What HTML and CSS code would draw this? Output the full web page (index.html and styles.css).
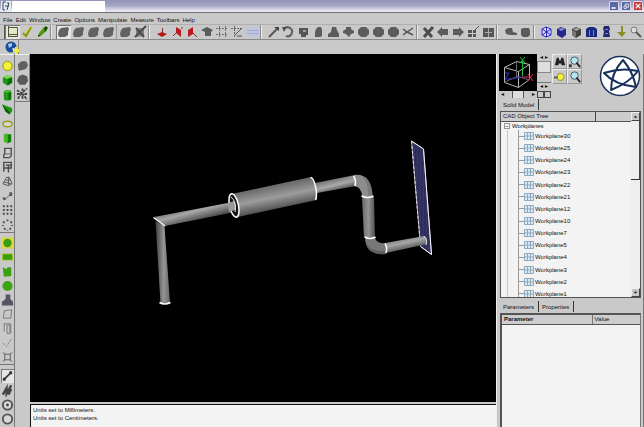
FILE: index.html
```html
<!DOCTYPE html>
<html lang="en">
<head>
<meta charset="utf-8">
<title>CAD Workspace</title>
<link rel="stylesheet" href="styles.css">
</head>
<body>
<svg class="defs" aria-hidden="true">
  <defs>
    <linearGradient id="tubeH" gradientUnits="userSpaceOnUse" x1="195" y1="202" x2="200" y2="221"><stop offset="0" stop-color="#555"/><stop offset=".45" stop-color="#a8a8a8"/><stop offset="1" stop-color="#444"/></linearGradient>
    <linearGradient id="tubeV" gradientUnits="userSpaceOnUse" x1="156" y1="0" x2="170" y2="0"><stop offset="0" stop-color="#444"/><stop offset=".55" stop-color="#959595"/><stop offset="1" stop-color="#666"/></linearGradient>
    <linearGradient id="drum" gradientUnits="userSpaceOnUse" x1="271" y1="185" x2="276" y2="210"><stop offset="0" stop-color="#666"/><stop offset=".5" stop-color="#9c9c9c"/><stop offset="1" stop-color="#4c4c4c"/></linearGradient>
    <linearGradient id="tubeR" gradientUnits="userSpaceOnUse" x1="334" y1="179" x2="337" y2="191"><stop offset="0" stop-color="#777"/><stop offset=".5" stop-color="#aaa"/><stop offset="1" stop-color="#505050"/></linearGradient>
    <linearGradient id="tubeD" gradientUnits="userSpaceOnUse" x1="362" y1="0" x2="375" y2="0"><stop offset="0" stop-color="#6a6a6a"/><stop offset=".5" stop-color="#929292"/><stop offset="1" stop-color="#505050"/></linearGradient>
    <linearGradient id="tubeE" gradientUnits="userSpaceOnUse" x1="404" y1="237" x2="407" y2="251"><stop offset="0" stop-color="#777"/><stop offset=".4" stop-color="#a6a6a6"/><stop offset="1" stop-color="#454545"/></linearGradient>
    <pattern id="mesh" width="3" height="3" patternUnits="userSpaceOnUse"><path fill="#2c2c58" d="M0 0h3v3H0z"/><path fill="#3a3a6c" d="M0 0h1v2H0zM2 2h1v1H2z"/></pattern>
  </defs>
  <symbol id="slab" viewBox="0 0 15 14"><path fill="#626262" d="M3 5l2-2 7-1 1 2-1 3 0 3-3 2H3L2 9z"/></symbol>
  <symbol id="disc" viewBox="0 0 15 14"><path fill="#5c5c5c" d="M5 2h5l3 3v4l-3 3H5L2 9V5z"/></symbol>
  <symbol id="tri" viewBox="0 0 15 14"><path fill="#5c5c5c" d="M6 2l4 0 1 3 2 4v3H2V9l3-2z"/></symbol>
  <symbol id="small-blob" viewBox="0 0 15 14"><path fill="#5c5c5c" d="M5 4l2-2h3l1 3v6l-2 1H4V7z"/></symbol>
  <symbol id="wp" viewBox="0 0 10 8"><path fill="#dceaf4" d="M0 0h10v8H0z"/><path fill="none" stroke="#8fa9c0" d="M.5 .5h9v7h-9zM0 4h10M3.500 0v8M6.500 0v8"/></symbol>
</svg>

<header class="titlebar">
  <svg class="app-icon" viewBox="0 0 10 10"><path fill="#e8eef4" d="M0 0h10v10H0z"/><path fill="none" stroke="#30485f" d="M5 1H2v8h2M4 5h4M6 2h2l-2 7"/></svg>
  <div class="title-field"></div>
  <div class="window-buttons">
    <button aria-label="Minimize"><svg viewBox="0 0 10 9"><path fill="#fff" d="M2 6h5v2H2z"/></svg></button>
    <button aria-label="Restore"><svg viewBox="0 0 10 9"><path fill="none" stroke="#fff" d="M4 4V2h4v4H6M2.500 4.500h3v3h-3z"/></svg></button>
    <button class="close" aria-label="Close"><svg viewBox="0 0 10 9"><path stroke="#fff" stroke-width="1.500" d="M2 1.500l6 6M8 1.500l-6 6"/></svg></button>
  </div>
</header>

<nav class="menubar">
  <button>File</button><button>Edit</button><button>Window</button><button>Create</button><button>Options</button><button>Manipulate</button><button>Measure</button><button>Toolbars</button><button>Help</button>
</nav>

<div class="toolbar" role="toolbar">
  <div class="tools first">
    <button class="on" aria-label="New"><svg viewBox="0 0 15 14"><path fill="#e4e8c8" stroke="#4a5a32" d="M3.500 2.500h9v9h-9z"/><path stroke="#4a5a32" d="M3 9.500h9M3.500 1v11"/></svg></button>
    <button aria-label="Accept"><svg viewBox="0 0 15 14"><path fill="none" stroke="#8d9800" stroke-width="2" d="M3 8l3 3 5-9"/><path stroke="#d8e020" d="M5 9l5-7"/></svg></button>
    <button aria-label="Edit"><svg viewBox="0 0 15 14"><path fill="#4c9a12" d="M4 8l5-6 3 0 0 3-5 5-4 2z"/><path fill="#1c4808" d="M9 3l2-2 2 2-3 4zM3 10h3l-3 2z"/></svg></button>
  </div>
  <div class="tools grip">
    <button class="on" aria-label="Solid"><svg><use href="#slab"/></svg></button>
    <button aria-label="Face"><svg><use href="#slab"/></svg></button>
    <button aria-label="Edge"><svg><use href="#slab"/></svg></button>
    <button aria-label="Body"><svg><use href="#slab"/></svg></button>
    <button class="split" aria-label="Part"><svg><use href="#slab"/></svg></button>
    <button aria-label="Deselect"><svg viewBox="0 0 15 14"><path fill="#808080" d="M3 3l8 0 0 8-8 1z"/><path fill="none" stroke="#4c4c4c" stroke-width="2" d="M2 12L13 1M3 3l8 9"/></svg></button>
  </div>
  <div class="tools grip wide">
    <button aria-label="Workplane"><svg viewBox="0 0 15 14"><path fill="#b81818" d="M2 9l5-2 5 2-5 3z"/><path stroke="#803030" d="M7.500 3v5"/></svg></button>
    <button aria-label="Workplane by face"><svg viewBox="0 0 15 14"><path fill="#c01820" d="M6 2l5 3v7L6 8z"/><path stroke="#803030" d="M3 11l4-4M11 3l2 0"/></svg></button>
    <button aria-label="Workplane by axis"><svg viewBox="0 0 15 14"><path fill="#c01820" d="M3 5l5-3v7l-5 3z"/><path stroke="#803030" d="M8 8l4 4"/></svg></button>
    <button aria-label="Sketch"><svg viewBox="0 0 15 14"><path fill="#5c5c5c" d="M1 5l6-3 6 3-2 2v4H5V7z"/></svg></button>
    <button aria-label="Grid"><svg viewBox="0 0 15 14"><path fill="none" stroke="#707070" stroke-dasharray="2 1" d="M1 3.500h12M4.500 1v11M10.500 1v11M1 9.500h12"/></svg></button>
    <button aria-label="Snap"><svg viewBox="0 0 15 14"><path fill="none" stroke="#686868" stroke-dasharray="2 1" d="M1 3.500h12M4.500 1v11"/><path stroke="#505050" d="M5 10l7-7M7 11h5"/></svg></button>
    <button aria-label="Plane list"><svg viewBox="0 0 15 14"><path fill="#bfc5dc" d="M2 2h12v10H2z"/><path stroke="#a4abd0" d="M2 5.500h12M2 8.500h12"/></svg></button>
  </div>
  <div class="tools grip">
    <button aria-label="Line"><svg viewBox="0 0 15 14"><path stroke="#555" stroke-width="2" d="M3 12l9-9"/><path fill="#444" d="M8 2h5v4z"/></svg></button>
    <button aria-label="Rotate"><svg viewBox="0 0 15 14"><path fill="none" stroke="#606060" stroke-width="2" d="M3 4a4.500 4.500 0 1 1 2 7"/><path fill="#505050" d="M1 2h5L3 7z"/></svg></button>
    <button aria-label="Extrude"><svg viewBox="0 0 15 14"><path fill="#555" d="M3 3h9v7l-2 0v2H5V9H3z"/><path fill="#a0a0a0" d="M7 5h3v2H7z"/></svg></button>
    <button aria-label="Revolve"><svg><use href="#small-blob"/></svg></button>
    <button aria-label="Loft"><svg><use href="#tri"/></svg></button>
    <button aria-label="Shell"><svg viewBox="0 0 15 14"><path fill="#5c5c5c" d="M5 2h5v2l3 2v2l-3 1-2 3-3-3-3-1V6l3-2z"/></svg></button>
    <button aria-label="Union"><svg><use href="#disc"/></svg></button>
    <button aria-label="Subtract"><svg><use href="#disc"/></svg></button>
    <button aria-label="Intersect"><svg><use href="#disc"/></svg></button>
    <button aria-label="Trim"><svg viewBox="0 0 15 14"><path fill="none" stroke="#555" stroke-width="1.500" d="M2 4l4 3 6-4M2 10l4-3 6 3"/></svg></button>
  </div>
  <div class="tools grip thin">
    <button aria-label="Delete"><svg viewBox="0 0 15 14"><path stroke="#4c4c4c" stroke-width="3" d="M3 3l8 9M12 2l-9 10"/></svg></button>
    <button aria-label="Move"><svg viewBox="0 0 15 14"><path fill="#5c5c5c" d="M1 7l5-5v2h6v6H6v2z"/></svg></button>
    <button aria-label="Copy"><svg viewBox="0 0 15 14"><path fill="#5c5c5c" d="M2 4h6V2l5 5-5 5v-2H2z"/></svg></button>
    <button aria-label="Array"><svg viewBox="0 0 15 14"><path fill="#555" d="M2 5h4v3H2zM7 5h3v3H7zM2 9h4v3H2zM7 9h3v3H7z"/><path stroke="#555" d="M9 5l4-4"/></svg></button>
    <button aria-label="Mirror"><svg viewBox="0 0 15 14"><path fill="#555" d="M2 3h11v9H2z"/><path stroke="#aaa" d="M7.500 3v9M4 7.500h7"/></svg></button>
  </div>
  <div class="tools grip wide">
    <button aria-label="Measure length"><svg viewBox="0 0 15 14"><path fill="#5c5c5c" d="M2 5l3-2 4 0 1 4 4 1v2H7l-4-1z"/></svg></button>
    <button aria-label="Measure mass"><svg viewBox="0 0 15 14"><path fill="#5c5c5c" d="M3 4l2-1h6l1 3v4l-2 2H5L3 10z"/></svg></button>
  </div>
  <div class="tools grip last">
    <button aria-label="Wireframe"><svg viewBox="0 0 15 14"><path fill="#dcdcf4" stroke="#2828c0" d="M3 4l4-2 5 2v6l-5 2-4-2zM3 4l9 6M12 4l-9 6M7.500 2v10"/></svg></button>
    <button aria-label="Shaded edges"><svg viewBox="0 0 15 14"><path fill="#28288c" d="M3 4l4-2 5 2v6l-4 3-5-3z"/><path fill="#8e8ed0" d="M4 4l4-1 3 1-4 2z"/></svg></button>
    <button aria-label="Shaded"><svg viewBox="0 0 15 14"><path fill="#444" d="M3 4l4-2 5 2v6l-5 3-4-3z"/><path fill="#aaa" d="M4 4l4-1 3 1-4 2z"/><path fill="#777" d="M3 5l4 2v5l-4-2z"/></svg></button>
    <button aria-label="Hidden line"><svg viewBox="0 0 15 14"><path fill="#182880" d="M2 4l3-2h5l3 2v8H2z"/><path stroke="#6a86dc" d="M5.500 5v6M9.500 5v6"/></svg></button>
    <button aria-label="Section"><svg viewBox="0 0 15 14"><path fill="#202870" d="M5 1h5l1 3-1 2 1 6H4l1-6-1-2z"/><path stroke="#8088d0" d="M6 4.500h3M6 8.500h3"/></svg></button>
    <button aria-label="Drop"><svg viewBox="0 0 15 14"><path stroke="#8a8c28" stroke-width="2" d="M8 1v7"/><path fill="#8a8c28" d="M3 7h9l-4 5z"/></svg></button>
    <button aria-label="Zoom"><svg viewBox="0 0 15 14"><circle cx="5" cy="5" r="3" fill="#ddd" stroke="#777"/><path stroke="#555" stroke-width="2" d="M7 7l5 5"/></svg></button>
  </div>
</div>

<div class="subbar">
  <button aria-label="Browser"><svg viewBox="0 0 15 13"><circle cx="7" cy="6" r="5.500" fill="#184c9c"/><path fill="#a8ccec" d="M4 3l4-1 0 3-3 2zM8 7l3 0-2 3z"/><path fill="#f0ec40" d="M9 8h2V6h2v2h2v3h-2v2h-2v-2H9z"/></svg></button>
</div>

<main class="workspace">
  <div class="rail" role="toolbar">
    <div class="stack tall">
      <button aria-label="Sphere"><svg viewBox="0 0 14 14"><circle cx="7" cy="7" r="5" fill="#f4f43c" stroke="#8a9000"/></svg></button>
      <button aria-label="Box"><svg viewBox="0 0 14 14"><path fill="#1e9a10" d="M2 4l5-2 5 2v6l-5 3-5-3z"/><path fill="#7cdc4c" d="M2 4l5-2 5 2-5 2z"/><path fill="#0c6c08" d="M7 6l5-2v6l-5 3z"/></svg></button>
      <button aria-label="Cylinder"><svg viewBox="0 0 14 14"><path fill="#229a14" d="M3 3l2-1h5l1 1v8l-1 2H4l-1-2z"/><path fill="#116a0a" d="M8 4h3v8H8z"/><path fill="#74cc50" d="M4 3h6v1H4z"/></svg></button>
      <button aria-label="Cone"><svg viewBox="0 0 14 14"><path fill="#1e9a14" d="M1 2l11 4v4l-3 3z"/><path fill="#0a5808" d="M1 2l8 8v3L5 10z"/></svg></button>
      <button aria-label="Torus"><svg viewBox="0 0 14 14"><ellipse cx="7" cy="7" rx="5" ry="3" fill="#d8d8cc" stroke="#9a9e24" stroke-width="1.500"/></svg></button>
      <button aria-label="Prism"><svg viewBox="0 0 14 14"><path fill="#48b824" d="M3 3l4-1v11l-4-2z"/><path fill="#147c0c" d="M7 3l4 0v8l-4 2z"/></svg></button>
      <button aria-label="Extruded profile"><svg viewBox="0 0 14 14"><path fill="#ccc" stroke="#505050" stroke-width="1.500" d="M4 2h7v8l-2 2H3V9l1-1z"/><path stroke="#606060" d="M4 8h6"/></svg></button>
      <button aria-label="Swept profile"><svg viewBox="0 0 14 14"><path fill="none" stroke="#4c4c4c" stroke-width="1.500" d="M3 12V2h8v6H3M8 5v8M5 5h6"/></svg></button>
      <button aria-label="Pyramid"><svg viewBox="0 0 14 14"><path fill="none" stroke="#555" d="M6 3h3l3 7-4 2-6-2zM3 8l8 2M5 6h5M8 3l0 9"/></svg></button>
      <button aria-label="Pipe"><svg viewBox="0 0 14 14"><path fill="none" stroke="#555" d="M2 8l2 3 3-3 4-3"/><path fill="#555" d="M9 3h3v4H9zM2 9h3v2H2z"/></svg></button>
      <button aria-label="Rectangular pattern"><svg viewBox="0 0 14 14"><path fill="#484848" d="M2 2h2v2H2zM6 2h2v2H6zM10 2h2v2h-2zM2 6h2v2H2zM6 6h2v2H6zM10 6h2v2h-2zM2 10h2v2H2zM6 10h2v2H6zM10 10h2v2h-2z"/></svg></button>
      <button aria-label="Circular pattern"><svg viewBox="0 0 14 14"><path fill="#505050" d="M6 1h2v2H6zM2 3h2v2H2zM10 3h2v2h-2zM1 7h2v1H1zM11 7h2v1h-2zM3 10h2v2H3zM9 10h2v2H9zM6 12h2v1H6z"/></svg></button>
    </div>
    <div class="stack mid">
      <button aria-label="Round hole"><svg viewBox="0 0 14 14"><path fill="#d8d840" d="M1 1h12v12H1z"/><circle cx="7" cy="7" r="4.500" fill="#3a9c10"/></svg></button>
      <button aria-label="Slot"><svg viewBox="0 0 14 14"><path fill="#b4c83c" d="M1 3h12v8H1z"/><path fill="#3aa010" d="M2 4h10v6H2z"/></svg></button>
      <button aria-label="Boss"><svg viewBox="0 0 14 14"><path fill="#3aa010" d="M2 3l4 2 1-2h4v9l-3 1H3z"/></svg></button>
      <button aria-label="Dome"><svg viewBox="0 0 14 14"><circle cx="7" cy="7" r="5.500" fill="#3ca412"/></svg></button>
      <button aria-label="Stamp"><svg viewBox="0 0 14 14"><path fill="#555565" d="M5 1h5v5l3 3v4H1V9l4-3z"/></svg></button>
      <button aria-label="Skew face"><svg viewBox="0 0 14 14"><path fill="none" stroke="#777" d="M3.500 3.500l8-1-1 9h-8z"/></svg></button>
      <button aria-label="Thin wall"><svg viewBox="0 0 14 14"><path fill="none" stroke="#777" d="M3.500 2.500h7v10M3.500 2v9M6.500 4v9h3V4z"/></svg></button>
      <button aria-label="Break"><svg viewBox="0 0 14 14"><path fill="none" stroke="#888" stroke-dasharray="3 1" d="M2 7l4 4 5-8"/></svg></button>
      <button aria-label="Stretch"><svg viewBox="0 0 14 14"><path fill="none" stroke="#606060" d="M2 2l2 2h6l2-2M2 12l2-2h6l2 2M4 3v8M10 3v8"/></svg></button>
    </div>
    <div class="stack short">
      <button class="on" aria-label="Segment"><svg viewBox="0 0 14 14"><path stroke="#3c3c3c" stroke-width="2" d="M3 11l8-8"/><path fill="#333" d="M9 2h3v3H9zM2 9h3v3H2z"/></svg></button>
      <button aria-label="Polyline"><svg viewBox="0 0 14 14"><path fill="none" stroke="#444" stroke-width="2.500" d="M2 12l4-7v6l5-9M8 12l3-6"/></svg></button>
      <button aria-label="Circle by center"><svg viewBox="0 0 14 14"><circle cx="7" cy="7" r="5" fill="#d8d8d8" stroke="#505050" stroke-width="2"/><circle cx="7" cy="7" r="1.500" fill="#444"/></svg></button>
      <button aria-label="Circle"><svg viewBox="0 0 14 14"><circle cx="7" cy="7" r="5" fill="#d8d8d8" stroke="#555" stroke-width="2"/></svg></button>
    </div>
  </div>
  <div class="rail second" role="toolbar">
    <div class="stack three">
      <button aria-label="Blend"><svg viewBox="0 0 14 14"><path fill="#606060" d="M2 5l4-3h5l2 4-2 4-3 1-5 1z"/></svg></button>
      <button aria-label="Chamfer"><svg viewBox="0 0 14 14"><path fill="#5a5a5a" d="M3 3l4-2 5 2 1 5-3 4H4L1 8z"/></svg></button>
      <button aria-label="Explode"><svg viewBox="0 0 14 14"><path fill="none" stroke="#484848" stroke-width="2" stroke-dasharray="3 1" d="M1 3l5 3 6-5M2 12l4-6 6 7M1 7h12M7 1v12"/></svg></button>
    </div>
  </div>

  <section class="center">
    <svg class="viewport" viewBox="30 54 466 348" preserveAspectRatio="xMidYMid meet" role="img" aria-label="Pipe model">
      <path fill="url(#mesh)" stroke="#a8a8c0" d="M411.500 141l12 8 8 105.500-11-8z"/>
      <path fill="none" stroke="#f0f0f0" d="M411.500 141l12 8 8 105.500-11-8"/>
      <path fill="none" stroke="#e0e0e0" stroke-dasharray="3 2" d="M411.500 141l9 105"/>
      <path fill="url(#tubeV)" d="M155.500 221l9 5 5.500 77h-9.500z"/>
      <path fill="url(#tubeH)" d="M154 217l79-15 2 10-70 14z"/>
      <path fill="none" stroke="#fff" stroke-width="1.500" d="M153.500 217.500l11.500 8.500M159.500 302.500q5 3 11 0"/>
      <path fill="url(#tubeR)" d="M315 183l40-8 1 11-39 7z"/>
      <path fill="url(#drum)" d="M232 194l79-17q6 8 5.500 23L238 217z"/>
      <ellipse cx="234" cy="205.500" rx="4.500" ry="12" fill="#181818" stroke="#fff" stroke-width="1.500" transform="rotate(-12 234 205.500)"/>
      <path fill="#999" d="M228 203l6-2q3 5 1 9l-6 2z"/>
      <path fill="none" stroke="#f0f0f0" d="M231 197q6 5 4 15"/>
      <path fill="none" stroke="#fff" stroke-width="1.500" d="M310.500 177.500q3 0 5 9 2 9 0 13.500"/>
      <path fill="url(#tubeD)" d="M362 197h12l1 41h-11z"/>
      <path fill="#8d8d8d" d="M354 175q18-2 18.500 22H362q0-10-8-11z"/>
      <path fill="#666" opacity=".5" d="M362 176q10 4 10.500 21h-4q0-14-6.500-21z"/>
      <path fill="#777" d="M365 237h10q1 7 10 6l1 11q-21 2-21-17z"/>
      <path fill="#505050" opacity=".6" d="M366 243q6 10 20 8v3q-17 1-20-11z"/>
      <path fill="url(#tubeE)" d="M385 243l39-7q4 3 3 8l-41 9z"/>
      <path fill="none" stroke="#fff" stroke-width="1.500" d="M353.500 176q3 4 1.500 10M361.500 196q6 3 12 0M365 237q5 3 10.500 0M385 243.500q2.500 4 1 9.500"/>
      <path fill="none" stroke="#ddd" d="M424 236q4 3 2 9"/>
    </svg>
    <div class="console" role="log">
      <p>Units set to Millimeters.</p>
      <p>Units set to Centimeters.</p>
    </div>
  </section>

  <aside class="side">
    <div class="view-tools">
      <div class="orient">
        <svg class="axes" viewBox="0 0 38 37" role="img" aria-label="Axis orientation"><path fill="none" stroke="#b8b8b8" d="M5.500 13.500l14 4 0 16-14-5zM5.500 13.500l12-6 13 3-11 7M30.500 10.500v15l-11 8"/><path fill="none" stroke="#666" d="M17.500 8v15l-12 5M17.500 22l13 4"/><path fill="none" stroke="#20c040" d="M23.500 22V6M21 3l5 6M26 3l-5 6"/><path fill="none" stroke="#d03050" d="M23 23h9M29 20l5 7M34 20l-5 7"/><path fill="none" stroke="#3838d8" d="M22 23l-12 2M6 19h4l-4 6h5"/></svg>
        <div class="vdial"><button aria-label="Tilt up">◂ ▸</button><span></span><i></i><button aria-label="Tilt down">◂ ▸</button></div>
        <div class="hdial"><button aria-label="Turn left">◂</button><span></span><button aria-label="Turn right">▸</button></div>
        <div class="cells"><i></i><i></i></div>
      </div>
      <div class="view-grid">
        <button aria-label="Find"><svg viewBox="0 0 15 15"><path fill="#222" d="M4 3h2l1 3h1l1-3h2l2 8H9V9H6v2H2z"/></svg></button>
        <button aria-label="Zoom window"><svg viewBox="0 0 15 15"><circle cx="7" cy="6" r="4" fill="#b8e4f0" stroke="#38586c"/><path stroke="#223" stroke-width="2" d="M9 8l4 5"/><path fill="#333" d="M1 10h3v3H1z"/></svg></button>
        <button aria-label="Highlight"><svg viewBox="0 0 15 15"><path fill="#f4f440" stroke="#909010" d="M6 4h4l2 3-2 4H6L4 8z"/><path stroke="#555" stroke-width="2" d="M1 8h4"/></svg></button>
        <button aria-label="Zoom fit"><svg viewBox="0 0 15 15"><circle cx="7" cy="6" r="4" fill="#b8e4f0" stroke="#38586c"/><path stroke="#223" stroke-width="2" d="M9 8l4 5"/></svg></button>
      </div>
      <svg class="logo" viewBox="0 0 42 42" role="img" aria-label="Star logo"><circle cx="21" cy="21" r="19.500" fill="#fff" stroke="#18305c" stroke-width="1.500"/><path fill="none" stroke="#18305c" stroke-width="2" stroke-linejoin="round" d="M24 5Q12 18 12 35Q30 28 39 16Q22 12 5 18Q16 30 37 32Q34 17 24 5z"/></svg>
    </div>

    <div class="tabs" role="tablist"><button role="tab" aria-selected="true">Solid Model</button></div>
    <div class="tree">
      <div class="tree-main">
        <div class="tree-head"><span>CAD Object Tree</span><span></span></div>
        <div class="root"><i>−</i>Workplanes</div>
        <ul>
          <li><svg><use href="#wp"/></svg>Workplane30</li>
          <li><svg><use href="#wp"/></svg>Workplane25</li>
          <li><svg><use href="#wp"/></svg>Workplane24</li>
          <li><svg><use href="#wp"/></svg>Workplane23</li>
          <li><svg><use href="#wp"/></svg>Workplane22</li>
          <li><svg><use href="#wp"/></svg>Workplane21</li>
          <li><svg><use href="#wp"/></svg>Workplane12</li>
          <li><svg><use href="#wp"/></svg>Workplane10</li>
          <li><svg><use href="#wp"/></svg>Workplane7</li>
          <li><svg><use href="#wp"/></svg>Workplane5</li>
          <li><svg><use href="#wp"/></svg>Workplane4</li>
          <li><svg><use href="#wp"/></svg>Workplane3</li>
          <li><svg><use href="#wp"/></svg>Workplane2</li>
          <li><svg><use href="#wp"/></svg>Workplane1</li>
        </ul>
      </div>
      <div class="scroll">
        <button aria-label="Scroll up"><svg viewBox="0 0 8 8"><path d="M2 5l2-2 2 2z"/></svg></button>
        <div class="thumb"></div>
        <button class="down" aria-label="Scroll down"><svg viewBox="0 0 8 8"><path d="M2 3l2 2 2-2z"/></svg></button>
      </div>
    </div>

    <div class="tabs lower" role="tablist"><button role="tab" aria-selected="true">Parameters</button><button role="tab" aria-selected="false">Properties</button></div>
    <div class="params">
      <table>
        <thead><tr><th class="name">Parameter</th><th>Value</th></tr></thead>
      </table>
    </div>
  </aside>
</main>
</body>
</html>
```
FILE: styles.css
```css
* { box-sizing: border-box; }

body {
  margin: 0;
  height: 100vh;
  display: flex;
  flex-direction: column;
  overflow: hidden;
  background: #c9c9c9;
  color: #111;
  font: 6px/8px "Liberation Sans", sans-serif;
}

button {
  margin: 0;
  padding: 0;
  border: 0;
  background: none;
  color: inherit;
  font: inherit;
}

svg { display: block; }
p, ul { margin: 0; padding: 0; list-style: none; }

.defs { position: absolute; width: 0; height: 0; }

/* Title bar */
.titlebar {
  flex: none;
  display: flex;
  align-items: center;
  height: 13px;
  padding-right: 1px;
  background: linear-gradient(#9494b8, #a4a4c4 45%, #e6e6f0 90%);
  border-bottom: 1px solid #70707c;
}
.app-icon { width: 10px; height: 10px; margin-left: 1px; }
.title-field { width: 93px; height: 11px; margin-left: 1px; background: #fff; }
.window-buttons { display: flex; gap: 2px; margin-left: auto; }
.window-buttons button {
  width: 10px;
  height: 10px;
  border: 1px solid #dcdcec;
  border-radius: 1px;
  background: #5868a4;
}
.window-buttons .close { background: #c83c3c; }
.window-buttons svg { width: 100%; height: 100%; }

/* Menu */
.menubar {
  flex: none;
  display: flex;
  gap: 3px;
  height: 11px;
  padding: 2px 3px 0;
}

/* Toolbars */
.toolbar {
  flex: none;
  display: flex;
  height: 16px;
  padding-left: 4px;
  border-top: 1px solid #b0b0b0;
  border-bottom: 1px solid #8a8a8a;
}
.tools { display: flex; border-right: 1px solid #888; }
.tools button, .subbar button { width: 15px; height: 14px; }
.tools svg { width: 15px; height: 14px; }
.tools.first { border-left: 1px solid #555; }
.tools.grip { padding-left: 4px; border-left: 1px solid #eee; }
.tools.wide { padding-left: 5px; }
.tools.thin { padding-left: 3px; }
.tools .split { width: 17px; padding-left: 1px; border-left: 1px solid #999; }
.on { background: #e6e6e6; box-shadow: inset 1px 1px #777; }

.subbar {
  flex: none;
  height: 14px;
  padding-left: 4px;
}
.subbar button { border-right: 1px solid #888; }
.subbar svg { width: 15px; height: 13px; }

/* Workspace */
.workspace { flex: 1; display: flex; min-height: 0; }
.rail { flex: none; width: 15px; border-right: 1px solid #777; }
.stack {
  display: grid;
  grid-auto-rows: 1fr;
  justify-items: center;
  padding-top: 4px;
  border-top: 1px solid #f0f0f0;
}
.stack button, .stack svg { width: 13px; height: 14px; }
.stack.tall { height: 178px; }
.stack.mid { height: 132px; padding-top: 3px; border-top-color: #777; }
.stack.short { height: 62px; border-top-color: #777; }
.rail.second { border: 0; }
.stack.three { height: 48px; border-right: 1px solid #888; border-bottom: 1px solid #777; }

.center { flex: 1; min-width: 0; display: flex; flex-direction: column; }
.viewport { flex: 1; min-height: 0; width: 100%; background: #000; }
.console {
  flex: none;
  height: 23px;
  margin-top: 2px;
  padding: 1px 2px;
  border-top: 1px solid #111;
  border-left: 1px solid #111;
  background: #f3f3f3;
}

/* Side panel */
.side {
  flex: none;
  width: 148px;
  display: flex;
  flex-direction: column;
  padding: 0 2px 0 2px;
  border-left: 1px solid #eee;
  border-right: 1px solid #777;
}
.view-tools { flex: none; display: flex; height: 45px; }
.orient {
  display: grid;
  grid-template-columns: 38px 14px;
  grid-template-rows: 37px 7px;
}
.axes { width: 38px; height: 37px; background: #000; }
.vdial { display: flex; flex-direction: column; text-align: center; }
.vdial button { height: 7px; line-height: 7px; }
.vdial span { height: 12px; background: #dedede; border: 1px solid #888; }
.vdial i { height: 10px; border-bottom: 1px solid #777; }
.hdial { display: flex; justify-content: space-between; padding: 0 2px; line-height: 7px; }
.hdial span { width: 12px; background: #ddd; border: solid #555; border-width: 0 1px; }
.cells { display: flex; }
.cells i { flex: 1; border: 1px solid #444; }
.view-grid {
  display: grid;
  grid-template-columns: 15px 15px;
  grid-template-rows: 15px 15px;
  margin-left: 1px;
}
.view-grid button { border: 1px solid #999; border-left-color: #eee; border-top-color: #eee; }
.view-grid svg { width: 14px; height: 14px; }
.logo { width: 42px; height: 42px; margin: 1px 0 0 auto; }

.tabs { flex: none; display: flex; height: 12px; padding-left: 1px; }
.tabs button { padding: 1px 4px 0 3px; border-right: 1px solid #333; line-height: 9px; height: 11px; }
.tabs.lower { margin-top: 3px; height: 12px; }

.tree {
  flex: none;
  display: flex;
  height: 187px;
  margin-left: 1px;
  border: 1px solid #555;
  background: #f3f3f3;
  overflow: hidden;
}
.tree-main { flex: 1; display: flex; flex-direction: column; }
.tree-head {
  display: flex;
  height: 10px;
  background: #cdcdcd;
  border-bottom: 1px solid #555;
  line-height: 9px;
}
.tree-head span:first-child { width: 95px; padding-left: 2px; border-right: 1px solid #444; }
.root { display: flex; align-items: center; gap: 2px; height: 8px; padding-left: 3px; }
.root i {
  width: 6px;
  height: 6px;
  border: 1px solid #999;
  font-style: normal;
  line-height: 4px;
  text-align: center;
}
.tree ul {
  flex: 1;
  display: grid;
  grid-auto-rows: 1fr;
  margin: 0 0 -3px 6px;
  padding-left: 10px;
  border-left: 1px solid #c8c8cc;
}
.tree li { display: flex; align-items: center; border-left: 1px solid #999; }
.tree li::before { content: ""; width: 5px; border-top: 1px solid #999; }
.tree li svg { width: 10px; height: 8px; margin-right: 1px; }

.scroll { display: flex; flex-direction: column; width: 9px; background: #eee; }
.scroll button {
  height: 9px;
  border: 1px solid #eee;
  border-right-color: #444;
  border-bottom-color: #444;
  background: #c9c9c9;
}
.scroll svg { width: 100%; height: 100%; }
.thumb { height: 59px; border-right: 1px solid #444; border-bottom: 1px solid #333; }
.scroll .down { margin-top: auto; }

.params {
  flex: 1;
  min-height: 0;
  margin-left: 1px;
  border: 2px solid #555;
  border-bottom: 0;
  border-right: 1px solid #777;
  background: #f3f3f3;
}
.params table { width: 100%; border-collapse: collapse; background: #cdcdcd; }
.params th {
  height: 9px;
  padding: 0 2px;
  border-bottom: 1px solid #555;
  font-weight: normal;
  line-height: 8px;
  text-align: left;
}
.params .name { width: 90px; font-weight: bold; border-right: 1px solid #777; }
```
